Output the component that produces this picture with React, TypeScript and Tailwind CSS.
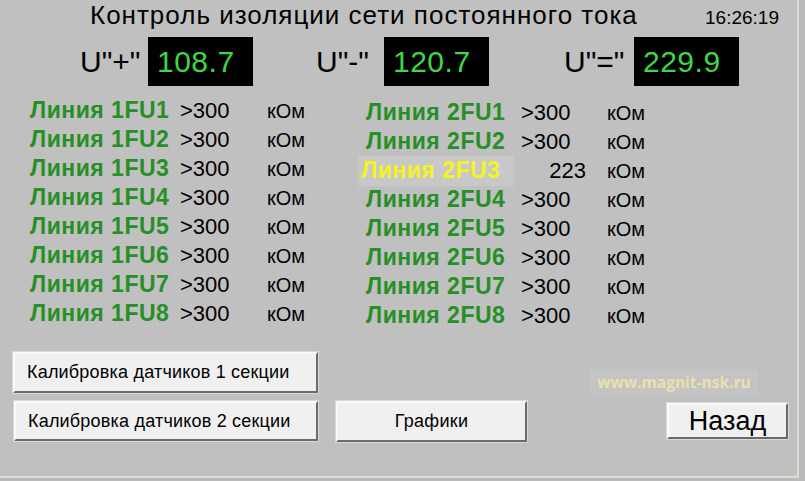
const font = "font-['Liberation_Sans',Arial,sans-serif]";

type Line = { name: string; value: string; alarm?: boolean };

const left: Line[] = [1, 2, 3, 4, 5, 6, 7, 8].map((n) => ({ name: `Линия 1FU${n}`, value: '>300' }));
const right: Line[] = [1, 2, 3, 4, 5, 6, 7, 8].map((n) =>
  n === 3 ? { name: `Линия 2FU${n}`, value: '223', alarm: true } : { name: `Линия 2FU${n}`, value: '>300' }
);

function Gauge({ label, value, labelW, gap }: { label: string; value: string; labelW: string; gap: string }) {
  return (
    <div className={`flex items-center ${gap}`}>
      <div className={`${labelW} text-[30px] leading-none text-black`}>{label}</div>
      <div className="w-[105px] h-[49px] bg-black flex items-center pl-[9px]">
        <span className="text-[30px] leading-none tracking-[0.5px] text-[#3fd64a]">{value}</span>
      </div>
    </div>
  );
}

function LineRow({ line, labelW, valueW }: { line: Line; labelW: string; valueW: string }) {
  return (
    <div className="flex items-center h-[29px]">
      {line.alarm ? (
        <div className={`${labelW} flex items-center h-[29px]`}>
          <span className="bg-[#c8c8c8] pl-[3px] pr-[14px] -ml-[8px] h-[30px] flex items-center text-[23px] tracking-[0.5px] font-bold leading-none text-[#f4f41e]">
            {line.name}
          </span>
        </div>
      ) : (
        <div className={`${labelW} text-[23px] tracking-[0.5px] font-bold leading-none text-[#268f26]`}>{line.name}</div>
      )}
      {line.alarm ? (
        <div className={`${valueW} flex justify-end pr-[21px]`}>
          <span className="text-[22px] leading-none text-black">{line.value}</span>
        </div>
      ) : (
        <div className={`${valueW} text-[22px] leading-none text-black`}>{line.value}</div>
      )}
      <div className="text-[20px] leading-none text-black">кОм</div>
    </div>
  );
}

function Button({ children, className }: { children: React.ReactNode; className: string }) {
  return (
    <div
      className={`bg-[#f0f0f0] border-2 border-t-[#fafafa] border-l-[#fafafa] border-b-[#6b6b6b] border-r-[#6b6b6b] shadow-[0_0_0_1px_#d8d8d8] flex items-center ${className}`}
    >
      {children}
    </div>
  );
}

export default function App() {
  return (
    <div className={`w-[805px] h-[481px] bg-[#b9b9b9] ${font}`}>
      <div className="w-[799px] h-[478px] bg-[#c0c0c0] border-r-2 border-b-2 border-[#dedcd2] flex flex-col">
        {/* Заголовок */}
        <div className="flex items-start h-[37px] pl-[90px] pr-[18px]">
          <div className="text-[26px] tracking-[1px] leading-none mt-[2px] text-black">
            Контроль изоляции сети постоянного тока
          </div>
          <div className="ml-auto mt-[8px] text-[19px] leading-none text-black">16:26:19</div>
        </div>

        {/* Напряжения */}
        <div className="flex items-center h-[49px] pl-[80px]">
          <Gauge label={'U"+"'} value="108.7" labelW="w-[68px]" gap="" />
          <Gauge label={'U"-"'} value="120.7" labelW="w-[68px]" gap="ml-[63px]" />
          <Gauge label={'U"="'} value="229.9" labelW="w-[70px]" gap="ml-[75px]" />
        </div>

        {/* Линии */}
        <div className="flex mt-[10px]">
          <div className="flex flex-col pl-[30px] w-[366px]">
            {left.map((l) => (
              <LineRow key={l.name} line={l} labelW="w-[150px]" valueW="w-[87px]" />
            ))}
          </div>
          <div className="flex flex-col mt-[2px]">
            {right.map((l) => (
              <LineRow key={l.name} line={l} labelW="w-[155px]" valueW="w-[86px]" />
            ))}
          </div>
        </div>

        {/* Кнопки */}
        <div className="flex items-start mt-[22px] pl-[13px]">
          <Button className="w-[305px] h-[41px] pl-[12px] text-[18px] tracking-[0.2px] text-black">
            Калибровка датчиков 1 секции
          </Button>
          <div className="ml-[272px] mt-[18px] w-[168px] h-[25px] bg-[#c4c4c4] flex items-center justify-center">
            <span className="font-['Open_Sans',sans-serif] font-bold text-[15.5px] leading-none text-[#e9e0ad]">
              www.magnit-nsk.ru
            </span>
          </div>
        </div>
        <div className="flex items-start mt-[6px] pl-[14px]">
          <Button className="w-[304px] h-[40px] pl-[12px] text-[18px] tracking-[0.2px] text-black">
            Калибровка датчиков 2 секции
          </Button>
          <Button className="ml-[18px] w-[191px] h-[41px] justify-center text-[18px] tracking-[0.3px] text-black">
            Графики
          </Button>
          <Button className="ml-[140px] mt-[2px] w-[121px] h-[36px] justify-center text-[27px] text-black">Назад</Button>
        </div>
      </div>
    </div>
  );
}
